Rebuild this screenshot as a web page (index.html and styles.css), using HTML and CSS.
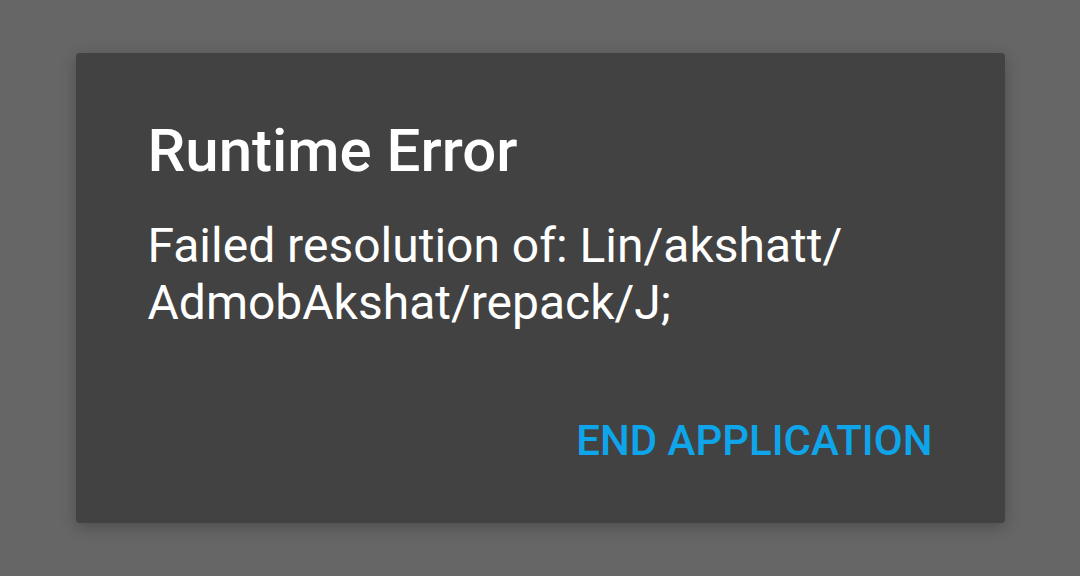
FILE: index.html
```html
<!DOCTYPE html>
<html>
<head>
<meta charset="utf-8">
<link rel="stylesheet" href="styles.css">
</head>
<body>
<div class="dialog">
  <h1 class="title">Runtime Error</h1>
  <p class="message">Failed resolution of: Lin/akshatt/<br>AdmobAkshat/repack/J;</p>
  <div class="actions">
    <span class="btn">END APPLICATION</span>
  </div>
</div>
</body>
</html>
```

FILE: styles.css
```css
html, body {
  margin: 0;
  padding: 0;
}
body {
  width: 1080px;
  height: 576px;
  background: #666666;
  display: flex;
  align-items: center;
  justify-content: center;
  font-family: Roboto, "Noto Sans", sans-serif;
  overflow: hidden;
}
.dialog {
  width: 929px;
  height: 470px;
  box-sizing: border-box;
  background: #424242;
  border-radius: 4px;
  box-shadow: 0 4px 16px rgba(0,0,0,0.25);
  padding: 62px 72px 0 72px;
  display: flex;
  flex-direction: column;
}
.title {
  margin: 0;
  font-size: 60px;
  line-height: 72px;
  font-weight: 500;
  color: #ffffff;
}
.message {
  margin: 30px 0 0 0;
  font-size: 48px;
  line-height: 57px;
  font-weight: 400;
  color: #ffffff;
}
.actions {
  margin-top: 81px;
  display: flex;
  justify-content: flex-end;
}
.btn {
  font-size: 42px;
  line-height: 57px;
  font-weight: 500;
  color: #0ea5ea;
}
```
